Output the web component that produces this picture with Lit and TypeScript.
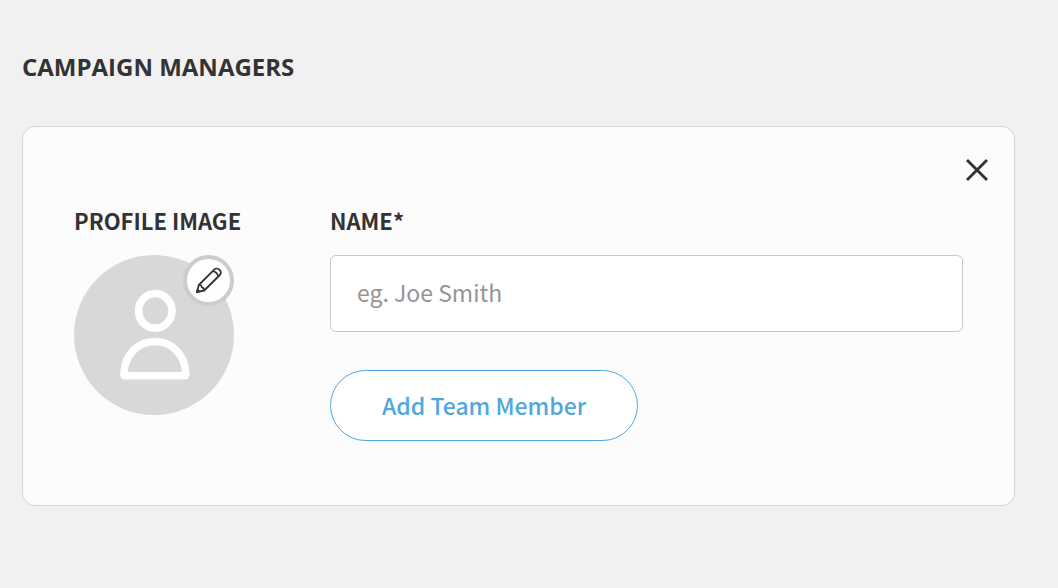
import { LitElement, html, css } from "lit";
import { customElement, state } from "lit/decorators.js";

@customElement("app-root")
export class AppRoot extends LitElement {
  static styles = css`
    :host {
      display: block;
      box-sizing: border-box;
      min-height: 100vh;
      padding: 51px 43px 48px 22px;
      background: #f1f1f1;
      color: #333;
      font-family: "Source Sans Pro", "Noto Sans CJK SC", sans-serif;
    }
    * {
      box-sizing: border-box;
    }
    .title {
      margin: 0 0 43px;
      font: 700 24px/32px "Open Sans", sans-serif;
    }
    .card {
      padding-bottom: 64px;
      background: #fcfcfc;
      border: 1px solid #d5d5d5;
      border-radius: 13px;
    }
    .card-top {
      display: flex;
      justify-content: flex-end;
      padding: 31px 25px 22px;
    }
    .close {
      display: flex;
      padding: 0;
      border: 0;
      background: none;
      color: #333;
      cursor: pointer;
    }
    .body {
      display: grid;
      grid-template-columns: 160px 1fr;
      column-gap: 96px;
      padding: 0 51px;
    }
    .label {
      display: block;
      margin-bottom: 19px;
      font-size: 22px;
      font-weight: 700;
      line-height: 32px;
      white-space: nowrap;
    }
    .avatar {
      position: relative;
      width: 160px;
      height: 160px;
      border-radius: 50%;
      background: #d8d8d8;
    }
    .edit {
      position: absolute;
      top: 0;
      right: 0;
      display: flex;
      align-items: center;
      justify-content: center;
      width: 51px;
      height: 51px;
      padding: 0;
      border: 4px solid #ccc;
      border-radius: 50%;
      background: #fff;
      color: #333;
      cursor: pointer;
    }
    svg {
      display: block;
      fill: none;
      stroke: currentColor;
    }
    .person {
      color: #fff;
    }
    .name {
      display: block;
      width: 100%;
      height: 77px;
      margin-bottom: 38px;
      padding: 0 26px 4px;
      border: 1px solid #c9c9c9;
      border-radius: 6px;
      background: #fff;
      color: #333;
      font: inherit;
      font-size: 23px;
    }
    .name::placeholder {
      color: #949494;
      opacity: 1;
    }
    .add {
      height: 71px;
      padding: 0 51px 1px;
      border: 1px solid #50a7dc;
      border-radius: 36px;
      background: #fff;
      color: #50a7dc;
      font: inherit;
      font-size: 23px;
      font-weight: 500;
      cursor: pointer;
    }
  `;

  @state() private name = "";

  private onInput(e: Event) {
    this.name = (e.target as HTMLInputElement).value;
  }

  render() {
    return html`
      <h1 class="title">CAMPAIGN MANAGERS</h1>
      <section class="card">
        <div class="card-top">
          <button class="close" type="button" aria-label="Close">
            <svg width="24" height="24" viewBox="0 0 24 24" stroke-width="2.9">
              <path d="M2 2L22 22M22 2L2 22" />
            </svg>
          </button>
        </div>
        <div class="body">
          <div>
            <span class="label">PROFILE IMAGE</span>
            <div class="avatar">
              <svg class="person" width="160" height="160" viewBox="0 0 160 160" stroke-width="7.6" stroke-linejoin="round">
                <ellipse cx="81.3" cy="55.8" rx="16.7" ry="17.3" />
                <path d="M51.2 120.8Q49.9 120.8 49.9 119C50.5 100 63.8 86.5 80.9 86.5S111.2 100 111.8 119Q111.8 120.8 110.5 120.8Z" />
              </svg>
              <button class="edit" type="button" aria-label="Edit profile image">
                <svg width="27" height="27" viewBox="0 0 27 27" stroke-width="1.8" stroke-linejoin="round">
                  <path d="M1.9 25.2L3.8 18L19.2 2.6C20.7 1.1 23.1 1.3 24.6 2.8C26.2 4.4 26.2 6.6 24.8 8L9.2 23.5Z" />
                  <path d="M3.8 18C5.8 17.8 6.6 18.5 6.7 20.3C8.3 20.4 9.2 21.3 9.2 23.5M17.6 4.2C20.2 4.6 22.7 7 23.2 9.6" />
                  <path d="M1.9 25.2L2.6 22.8L4.4 24.5Z" fill="currentColor" />
                </svg>
              </button>
            </div>
          </div>
          <div>
            <label class="label" for="name">NAME*</label>
            <input class="name" id="name" type="text" placeholder="eg. Joe Smith" .value=${this.name} @input=${this.onInput} />
            <button class="add" type="button">Add Team Member</button>
          </div>
        </div>
      </section>
    `;
  }
}
